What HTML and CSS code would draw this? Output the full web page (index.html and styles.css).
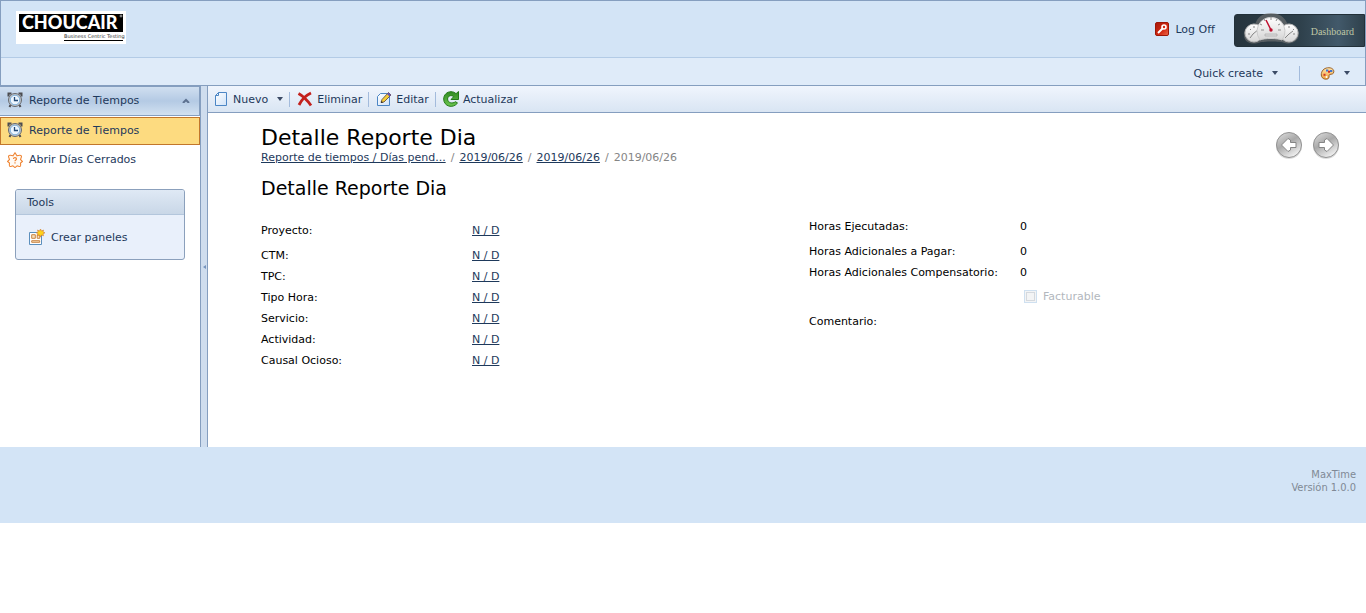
FILE: index.html
```html
<!DOCTYPE html>
<html lang="es">
<head>
<meta charset="utf-8">
<title>Detalle Reporte Dia - MaxTime</title>
<link rel="stylesheet" href="styles.css">
</head>
<body>
<svg class="defs" aria-hidden="true">
  <defs>
    <linearGradient id="metal" x1="0" y1="0" x2="0" y2="1"><stop offset="0" stop-color="#d8d8d8"/><stop offset="1" stop-color="#777"/></linearGradient>
    <linearGradient id="dial" x1="0" y1="0" x2="0" y2="1"><stop offset="0" stop-color="#fff"/><stop offset="1" stop-color="#d6d6d6"/></linearGradient>
    <linearGradient id="red" x1="0" y1="0" x2="1" y2="1"><stop offset="0" stop-color="#a51708"/><stop offset=".6" stop-color="#d42b14"/><stop offset="1" stop-color="#ee6a4a"/></linearGradient>
    <linearGradient id="paper" x1="0" y1="0" x2="1" y2="1"><stop offset="0" stop-color="#fff"/><stop offset="1" stop-color="#cfe2f8"/></linearGradient>
    <linearGradient id="green" x1="0" y1="0" x2="0" y2="1"><stop offset="0" stop-color="#2f8a20"/><stop offset="1" stop-color="#6cc650"/></linearGradient>
    <linearGradient id="gold" x1="0" y1="0" x2="0" y2="1"><stop offset="0" stop-color="#ffe5ad"/><stop offset="1" stop-color="#f0a33a"/></linearGradient>
    <linearGradient id="ball" x1="0" y1="0" x2=".6" y2="1"><stop offset="0" stop-color="#e2e2e2"/><stop offset=".5" stop-color="#a9a9a9"/><stop offset="1" stop-color="#efefef"/></linearGradient>
  </defs>
  <symbol id="clock" viewBox="0 0 16 16">
    <path d="M1.500 4.500v-3h3M14.500 4.500v-3h-3M3.500 13l-1 2M12.500 13l1 2" fill="none" stroke="#4c4c50" stroke-width="2"/>
    <circle cx="8" cy="8" r="6.500" fill="#c3c6ca" stroke="#66686d"/>
    <circle cx="8" cy="8" r="4.800" fill="#edf6ff" stroke="#7db0dc"/>
    <path d="M7.500 5v3.500H11" fill="none" stroke="#234a76" stroke-width="1.300"/>
  </symbol>
</svg>

<header class="header">
  <div class="brand-row">
    <svg class="logo" viewBox="0 0 110 33" role="img" aria-label="Choucair Business Centric Testing">
      <path fill="#fff" d="M0 0h110v33H0z"/><path d="M3 3h104v18H3z"/>
      <text x="6" y="18" class="logo-name" fill="#fff">CHOUCAIR</text>
      <circle cx="105" cy="5" r="1" fill="none" stroke="#fff" stroke-width=".6"/>
      <text x="48" y="27" class="logo-tag" fill="#333">Business Centric Testing</text>
      <path d="M48 29h59v1H48z"/>
    </svg>
    <div class="account">
      <a class="logoff" href="#">
        <svg class="i14" viewBox="0 0 14 14"><rect x=".5" y=".5" width="13" height="13" rx="1.500" fill="url(#red)" stroke="#9d1607"/><path d="M3 11l5-5" stroke="#fff" stroke-width="2"/><circle cx="9" cy="5" r="2" fill="#d42b14" stroke="#fff" stroke-width="1.600"/></svg>
        <span>Log Off</span>
      </a>
      <a class="dashboard" href="#">
        <svg class="gauges" viewBox="0 0 58 36">
          <path d="M1 24a9 9 0 0 1 11-10C14 6 20 2 28 2s14 4 17 12c6-1 11 3 11 9 0 7-8 11-14 9-5-2-22-2-27 0C8 34 1 31 1 24z" fill="#777" opacity=".6"/>
          <circle cx="11" cy="22" r="9" fill="url(#dial)" stroke="#bbb"/><circle cx="46" cy="22" r="9" fill="url(#dial)" stroke="#bbb"/>
          <path d="M5 23h2m0-5 1 1m3-4v2M10 23l6-5m-6 5-3 4M41 18l1 1m4-4v2m5 1-1 1m2 4h-2m-4 0-4 4m4-4 4-3" fill="none" stroke="#858585"/>
          <path d="M17 29a14 14 0 1 1 22 0c-4-2-18-2-22 0z" fill="url(#dial)" stroke="#ccc"/>
          <path d="M28 6v3m-7-1 1 2m12-2-1 2m-16 3 2 1m18-1-2 1m-17 5h3m14 0h3" stroke="#8c8c8c"/>
          <path d="M22 23h12v2H22z" fill="#ddd" stroke="#aaa" stroke-width=".7"/>
          <path d="M23 9l5 10" stroke="#bf102f" stroke-width="1.500"/><circle cx="28" cy="19" r="1.700" fill="#bf102f"/>
        </svg>
        <span>Dashboard</span>
      </a>
    </div>
  </div>
  <div class="menu-row">
    <button class="menu-btn" type="button">Quick create<i class="caret"></i></button>
    <i class="menu-sep"></i>
    <button class="menu-btn" type="button" aria-label="Tema">
      <svg class="palette" viewBox="0 0 14 13"><path d="M7 .8c4-.5 6.500 1.500 6.300 4-.2 2.700-2.500 2.200-4 2.700C7.500 8 9.500 9.500 8 11.300 6.500 13 1 12.500.8 8 .6 4 3.500 1.200 7 .8z" fill="url(#gold)" stroke="#99612a"/><path d="M5.500 2.500h2.300v2H5.500z" fill="#3c78d8"/><path d="M9.500 3h2.300v2H9.500z" fill="#3f72cd"/><path d="M7.500 3.800h2v2h-2z" fill="#d32a25"/><path d="M3 6.800h2v2H3z" fill="#ce342a"/><circle cx="6" cy="10" r="1" fill="#fff"/></svg>
      <i class="caret"></i>
    </button>
  </div>
</header>

<div class="body">
  <aside class="side">
    <nav>
      <button class="nav-head" type="button"><svg class="i16"><use href="#clock"/></svg><span>Reporte de Tiempos</span>
        <svg class="chev" viewBox="0 0 8 5"><path d="M1 5l3-3 3 3" fill="none" stroke="#5d7190" stroke-width="2"/></svg></button>
      <a class="nav-item selected" href="#"><svg class="i16"><use href="#clock"/></svg><span>Reporte de Tiempos</span></a>
      <a class="nav-item" href="#"><svg class="i16" viewBox="0 0 16 16"><path d="M8 .8l2 3c2-.8 4.500-1 4.500.7 0 1.200-1 2-1 3l2 2-2 1.500c0 1.500.7 3.200-.5 3.500-1 .2-2-.8-3-.6l-2 1.700-2-1.700c-1-.2-2 .8-3 .6-1.200-.3-.5-2-.5-3.500l-2-1.500 2-2c0-1-1-1.800-1-3C1.500 2.800 4 3 6 3.800z" fill="#fffaf4" stroke="#ef8534" stroke-width="1.100"/><path d="M6.500 7c0-2 3-1.800 3 0 0 1-1.500 1-1.500 2.200m0 1v1.200" fill="none" stroke="#ef8534" stroke-width="1.200"/></svg><span>Abrir Días Cerrados</span></a>
    </nav>
    <section class="tools">
      <h3>Tools</h3>
      <a class="tool-link" href="#">
        <svg class="i16" viewBox="0 0 16 16"><path d="M.5 3.500h12v12H.5z" fill="#fff" stroke="#5b8fbd"/><path d="M2.700 5.700h3.600v3.600H2.700zM8.200 5.700h2.600v3.600H8.200zM2.700 11.700h8v1.600h-8z" fill="#f7e0bd" stroke="#c98443"/><path d="M11.500 0l1 2 2-1-.5 2 2 .8-2 1 .5 2-2-.8-1 2-1-2-2 .8.7-2-2-1 2-.8-.7-2 2 1z" fill="#ffd21a" stroke="#d27a2d" stroke-width=".6"/></svg>
        <span>Crear paneles</span>
      </a>
    </section>
  </aside>
  <div class="splitter"><i></i></div>
  <main class="main">
    <div class="toolbar" role="toolbar">
      <button type="button"><svg class="i16" viewBox="0 0 16 16"><path d="M5.500 1.500h8v13h-11v-10z" fill="url(#paper)" stroke="#4c86c5"/><path d="M2.500 4.500h3v-3" fill="none" stroke="#4c86c5"/></svg>Nuevo<i class="caret"></i></button>
      <i class="sep"></i>
      <button type="button"><svg class="i16" viewBox="0 0 16 16"><path d="M1.500 2.500C6 5 10.500 9.500 14 14.500M14 2C8.500 4.500 4.500 9 2 14" fill="none" stroke="#c3211d" stroke-width="2.800"/></svg>Eliminar</button>
      <i class="sep"></i>
      <button type="button"><svg class="i16" viewBox="0 0 16 16"><path d="M4.500 2.500h9v12h-12v-9z" fill="url(#paper)" stroke="#4c86c5"/><path d="M5 11.500l1-3 6.500-7L15 4l-7 7z" fill="#f4cc37" stroke="#6b5440" stroke-width=".9"/><path d="M12.500 1.500L15 4l-1.500 1.500L11 3z" fill="#6553b5"/><path d="M5 12l.5-2 1.500 1.500z" fill="#222"/></svg>Editar</button>
      <i class="sep"></i>
      <button type="button"><svg class="i16" viewBox="0 0 16 16"><path d="M8 .7c2 0 3.700.7 5 2L15.500.500v8H8l2.700-2.800C8 3.500 4.600 5 4.600 8c0 3.700 4.800 5.200 7.900 2.700l2 1.300C10 18 .7 15.500.7 8 .7 3.800 4 .7 8 .7z" fill="url(#green)" stroke="#237a18"/></svg>Actualizar</button>
    </div>
    <div class="content">
      <div class="title-row">
        <div>
          <h1>Detalle Reporte Dia</h1>
          <nav class="crumbs"><a href="#">Reporte de tiempos / Días pend...</a><span>/</span><a href="#">2019/06/26</a><span>/</span><a href="#">2019/06/26</a><span>/</span><span>2019/06/26</span></nav>
        </div>
        <div class="pager">
          <button type="button" aria-label="Anterior"><svg viewBox="0 0 28 28"><circle cx="14" cy="15" r="13" fill="#ddd"/><circle cx="14" cy="14" r="12.500" fill="url(#ball)" stroke="#929292"/><path d="M6.500 14l6.500-6.500 2.500 1.500v2.500H21v5h-5.500V19L13 20.500z" fill="#fff" stroke="#858585" stroke-linejoin="round"/></svg></button>
          <button type="button" aria-label="Siguiente"><svg viewBox="0 0 28 28"><circle cx="14" cy="15" r="13" fill="#ddd"/><circle cx="14" cy="14" r="12.500" fill="url(#ball)" stroke="#929292"/><path d="M21.500 14L15 7.500 12.500 9v2.500H7v5h5.500V19l2.500 1.500z" fill="#fff" stroke="#858585" stroke-linejoin="round"/></svg></button>
        </div>
      </div>
      <h2>Detalle Reporte Dia</h2>
      <div class="form">
        <dl class="fields links">
          <dt>Proyecto:</dt><dd><a href="#">N / D</a></dd>
          <dt>CTM:</dt><dd><a href="#">N / D</a></dd>
          <dt>TPC:</dt><dd><a href="#">N / D</a></dd>
          <dt>Tipo Hora:</dt><dd><a href="#">N / D</a></dd>
          <dt>Servicio:</dt><dd><a href="#">N / D</a></dd>
          <dt>Actividad:</dt><dd><a href="#">N / D</a></dd>
          <dt>Causal Ocioso:</dt><dd><a href="#">N / D</a></dd>
        </dl>
        <div class="hours">
          <dl class="fields">
            <dt>Horas Ejecutadas:</dt><dd>0</dd>
            <dt>Horas Adicionales a Pagar:</dt><dd>0</dd>
            <dt>Horas Adicionales Compensatorio:</dt><dd>0</dd>
          </dl>
          <label class="check"><input type="checkbox" disabled>Facturable</label>
          <div class="comment">Comentario:</div>
        </div>
      </div>
    </div>
  </main>
</div>
<footer class="footer">MaxTime<br>Versión 1.0.0</footer>
</body>
</html>
```
FILE: styles.css
```css
* { box-sizing: border-box; }
body { margin: 0; background: #fff; color: #000; font: 11px/13px "DejaVu Sans", Verdana, sans-serif; }
h1, h2, h3, dl, dd { margin: 0; font-weight: normal; }
a { color: #1e395b; }
svg { flex: none; display: block; }
button { border: 0; background: none; padding: 0; font: inherit; color: #1e395b; text-align: left; }
.defs { position: absolute; width: 0; height: 0; }
.i14 { width: 14px; height: 14px; }
.i16 { width: 16px; height: 16px; }
.caret { border: 3px solid transparent; border-top: 4px solid #3c4b66; border-bottom: 0; margin-left: 9px; }

.header { border: 1px solid #859ebf; background: #d3e4f6; }
.brand-row { display: flex; justify-content: space-between; height: 57px; padding-left: 15px; border-bottom: 1px solid #b3cbe6; }
.logo { width: 110px; height: 33px; margin-top: 10px; }
.logo-name { font: 900 18px Lato, sans-serif; }
.logo-tag { font: 5px "DejaVu Sans", sans-serif; }
.account { display: flex; align-items: flex-start; gap: 19px; }
.logoff { display: flex; align-items: center; gap: 6px; margin-top: 21px; text-decoration: none; }
.dashboard { display: flex; align-items: center; justify-content: space-between; width: 131px; height: 33px; margin-top: 13px; padding: 0 10px 4px 8px; border: 1px solid #223039; border-radius: 3px 0 0 3px; background: linear-gradient(90deg, #26343d, #2e404b 50%, #42596a 80%, #2f414c); color: #bfc6a4; font: 10px "Liberation Serif", serif; text-decoration: none; }
.dashboard span { margin-top: 6px; }
.gauges { width: 58px; height: 36px; }
.menu-row { display: flex; justify-content: flex-end; align-items: center; height: 27px; padding: 3px 15px 0 0; background: #dfebf9; }
.menu-btn { display: flex; align-items: center; }
.menu-sep { width: 1px; height: 15px; margin: 0 20px 0 21px; background: #a3bbdc; }
.palette { width: 15px; height: 13px; }

.body { display: flex; min-height: 361px; }
.side { width: 200px; flex: none; }
.nav-head, .nav-item { display: flex; align-items: center; width: 100%; gap: 6px; padding: 0 9px 2px 7px; color: #1e395b; text-decoration: none; }
.nav-head { height: 30px; border: solid #859ebf; border-width: 1px 1px 1px 0; background: linear-gradient(#d0dff0, #b4cae4 50%, #d2e1f1); }
.chev { width: 8px; height: 5px; margin-left: auto; }
.nav-item { height: 29px; border: 1px solid transparent; padding-left: 6px; padding-bottom: 0; }
.nav-item.selected { height: 28px; margin-top: 1px; padding-bottom: 2px; border-color: #c2762b; background: #fddb80; }
.tools { margin: 15px 15px 0; border: 1px solid #8ba0bc; border-radius: 3px; background: #e9f0fb; }
.tools h3 { height: 25px; padding: 6px 11px; border-bottom: 1px solid #b3c6dc; background: linear-gradient(#dfe9f5, #c9d7e7); color: #1e395b; font-size: 11px; border-radius: 2px 2px 0 0; }
.tool-link { display: flex; align-items: center; gap: 6px; height: 44px; padding-left: 13px; text-decoration: none; }
.splitter { display: flex; align-items: center; justify-content: center; flex: none; width: 8px; border: solid #859ebf; border-width: 0 1px; background: #cfddee; }
.splitter i { border: 2px solid transparent; border-right: 3px solid #7694bd; border-left: 0; }

.main { flex: 1; min-width: 0; }
.toolbar { display: flex; align-items: center; height: 27px; padding-left: 5px; border-bottom: 1px solid #859ebf; background: linear-gradient(#f0f5fd, #d9e5f3); }
.toolbar button { display: flex; align-items: center; gap: 4px; }
.toolbar .caret { margin-left: 5px; }
.sep { width: 1px; height: 15px; margin: 0 7px 0 6px; background: #a3bbdc; }
.content { padding: 11px 26px 0 53px; }
.title-row { display: flex; justify-content: space-between; }
h1 { font-size: 22px; line-height: 27px; }
h2 { margin-top: 11px; font-size: 19px; line-height: 26px; }
.crumbs { display: flex; gap: 5px; color: #858585; }
.pager { display: flex; align-items: flex-start; gap: 9px; padding-top: 7px; }
.pager svg { width: 28px; height: 28px; }
.form { display: grid; grid-template-columns: 1fr 1fr; margin-top: 19px; column-gap: 17px; }
.fields { display: grid; grid-template-columns: 211px 1fr; row-gap: 8px; }
.fields dt:first-of-type { margin-bottom: 4px; }
.links { padding-top: 4px; }
.check { display: flex; align-items: center; gap: 6px; width: max-content; margin: 11px 0 0 215px; color: #b2b7bd; }
.check input { appearance: none; width: 13px; height: 13px; margin: 0; border: 1px solid #cfe0f0; outline: 1px solid #d5d9de; outline-offset: -3px; background: #f3f4f5; }
.comment { margin-top: 12px; }
.footer { height: 76px; padding: 21px 10px 0; background: #d3e4f6; color: #808995; font-family: "DejaVu Sans Condensed", Tahoma, sans-serif; font-size: 11px; text-align: right; }
```
